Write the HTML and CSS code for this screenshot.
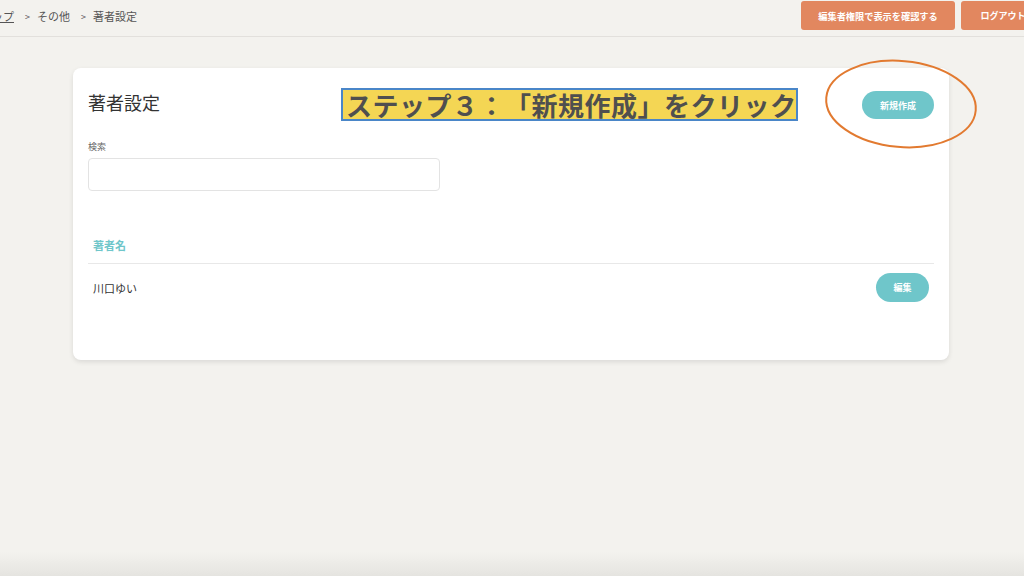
FILE: index.html
```html
<!DOCTYPE html>
<html lang="ja">
<head>
<meta charset="utf-8">
<link rel="stylesheet" href="styles.css">
</head>
<body>
<header class="topbar">
  <nav class="crumbs">
    <a class="crumb-link" href="#">トップ</a>
    <span class="sep">&gt;</span><span class="crumb">その他</span>
    <span class="sep">&gt;</span><span class="crumb">著者設定</span>
  </nav>
  <div class="top-actions">
    <button class="btn-orange btn-preview">編集者権限で表示を確認する</button>
    <button class="btn-orange btn-logout">ログアウト</button>
  </div>
</header>
<main class="main">
  <section class="card">
    <div class="card-head">
      <h1 class="title">著者設定</h1>
      <button class="btn-teal btn-new">新規作成</button>
    </div>
    <label class="label">検索</label>
    <div class="search"></div>
    <div class="table">
      <div class="th">著者名</div>
      <div class="row">
        <span class="name">川口ゆい</span>
        <button class="btn-teal btn-edit">編集</button>
      </div>
    </div>
    <div class="note">ステップ３：「新規作成」をクリック</div>
    <svg class="circle" width="170" height="104" viewBox="0 0 170 104">
      <ellipse cx="85" cy="50" rx="75" ry="43" transform="rotate(5 85 50)" fill="none" stroke="#e27a30" stroke-width="2"/>
    </svg>
  </section>
</main>
</body>
</html>
```
FILE: styles.css
```css
html {
  background: linear-gradient(to bottom, #f3f2ee 0, #f3f2ee 552px, #e5e4e0 576px);
  min-height: 100%;
}
body {
  margin: 0;
  font-family: "Noto Sans CJK JP", "Noto Sans", sans-serif;
  color: #333;
  overflow: hidden;
  height: 576px;
  text-spacing-trim: space-all;
}
.topbar {
  height: 36px;
  border-bottom: 1px solid #e2e0dc;
  display: flex;
  justify-content: space-between;
  align-items: flex-start;
}
.crumbs {
  display: flex;
  align-items: center;
  height: 32px;
  margin-left: -19px;
  font-size: 11px;
  color: #555;
}
.crumb-link {
  color: #555;
  text-decoration: underline;
}
.sep {
  font-size: 9px;
  margin: 0 7px 0 11px;
  color: #555;
}
.top-actions {
  display: flex;
  gap: 6px;
  padding-top: 1px;
  margin-right: -21px;
}
.btn-orange {
  background: #e2875f;
  color: #fff;
  border: none;
  border-radius: 3px;
  height: 29px;
  font-family: inherit;
  font-weight: bold;
  font-size: 9.2px;
  padding: 0;
}
.btn-preview { width: 154px; }
.btn-logout { width: 84px; font-size: 9px; }
.main {
  padding: 31px 75px 0 73px;
}
.card {
  position: relative;
  width: 876px;
  box-sizing: border-box;
  background: #fff;
  border-radius: 8px;
  box-shadow: 0 2px 5px rgba(0,0,0,0.10);
  padding: 23px 15px 49px 15px;
}
.card-head {
  display: flex;
  justify-content: space-between;
  align-items: flex-start;
  height: 28px;
}
.title {
  margin: 0;
  font-size: 18px;
  font-weight: normal;
  color: #333;
  line-height: 22px;
}
.btn-teal {
  background: #6fc6ca;
  color: #fff;
  border: none;
  border-radius: 15px;
  font-family: inherit;
  font-weight: bold;
  font-size: 9px;
  padding: 0;
}
.btn-new { width: 72px; height: 28px; }
.btn-edit { width: 53px; height: 29px; }
.label {
  display: block;
  margin-top: 22px;
  font-size: 9px;
  line-height: 11px;
  color: #666;
}
.search {
  margin-top: 6px;
  width: 352px;
  height: 33px;
  box-sizing: border-box;
  border: 1px solid #e3e3e3;
  border-radius: 4px;
}
.table {
  margin-top: 35px;
}
.th {
  height: 37px;
  display: flex;
  align-items: center;
  padding-left: 5px;
  font-size: 11px;
  font-weight: bold;
  color: #6fc6ca;
  border-bottom: 1px solid #e8e8e8;
}
.row {
  display: flex;
  justify-content: space-between;
  align-items: center;
  padding: 9px 5px;
}
.name {
  font-size: 11px;
  color: #333;
}
.note {
  position: absolute;
  left: 268px;
  top: 20px;
  width: 457px;
  height: 33px;
  box-sizing: border-box;
  background: #f4d654;
  border: 2px solid #4a86c8;
  font-size: 26px;
  font-weight: bold;
  color: #4f4f4f;
  display: flex;
  align-items: center;
  line-height: 1;
  white-space: nowrap;
  padding-left: 3px;
  letter-spacing: 0.5px;
}
.circle {
  position: absolute;
  left: 743px;
  top: -14px;
}
```
